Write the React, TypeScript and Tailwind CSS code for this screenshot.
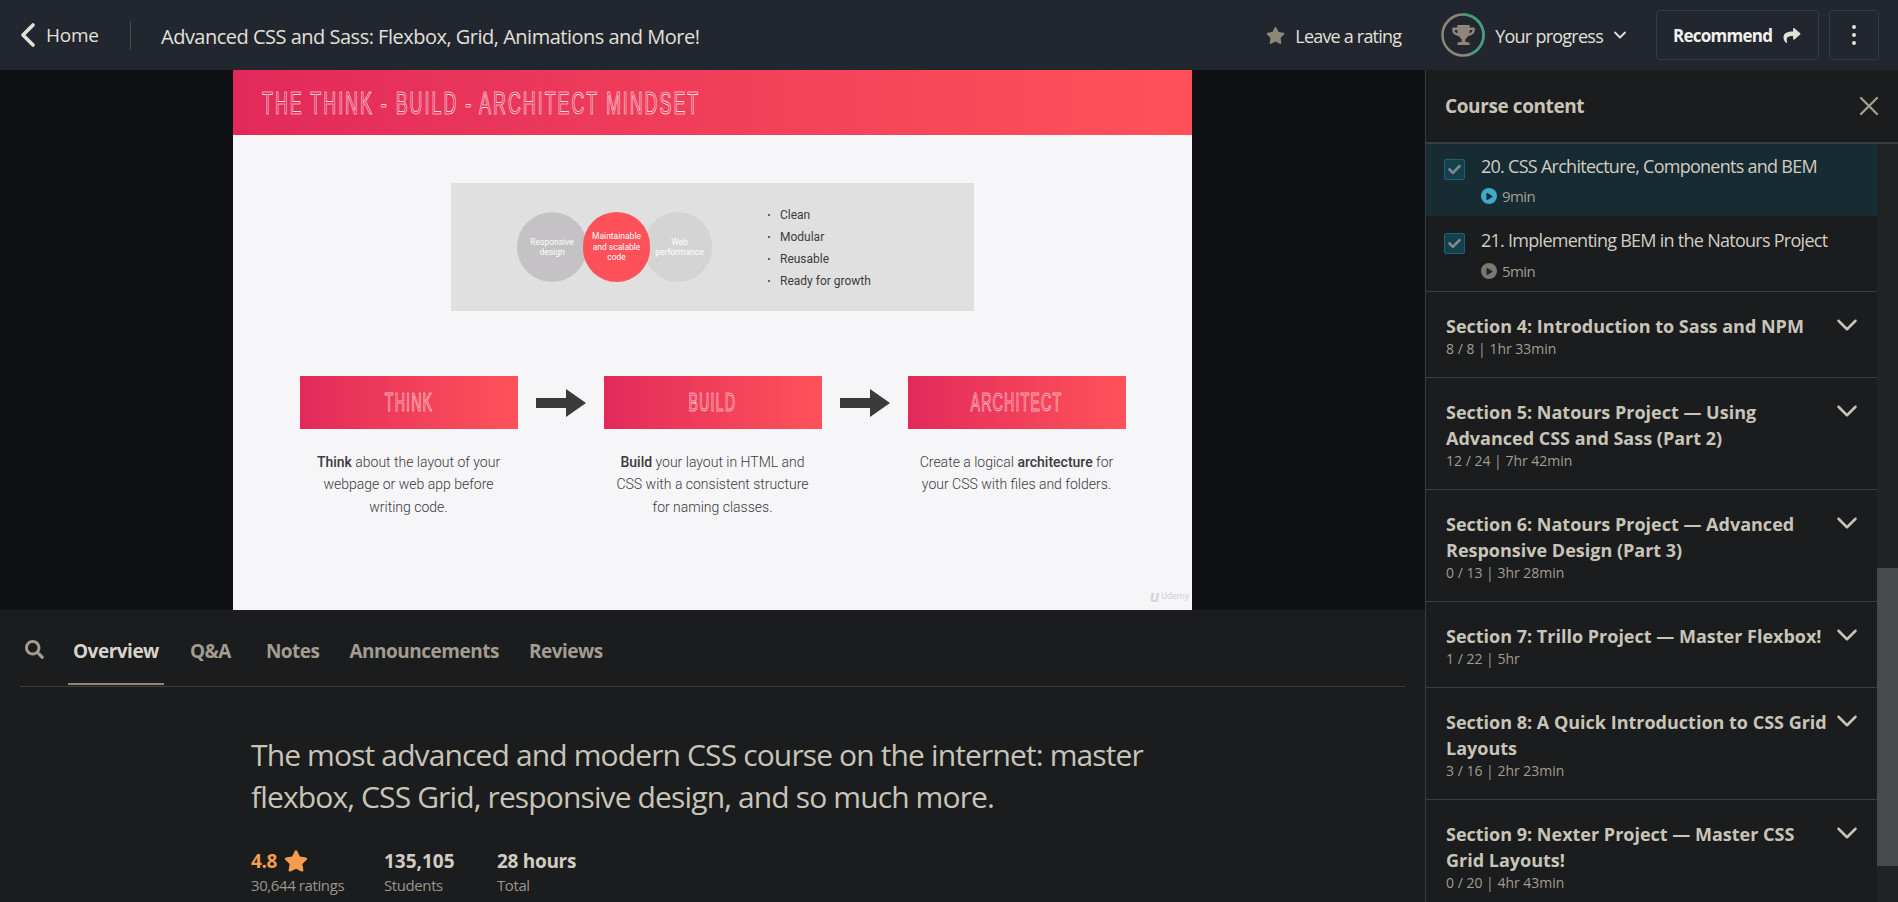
import { ChevronDown, ChevronLeft, X } from "lucide-react";
import { FaPlay, FaShare, FaStar, FaTrophy, FaSearch, FaCheck } from "react-icons/fa";

const sections = [
  { title: "Section 4: Introduction to Sass and NPM", meta: "8 / 8 | 1hr 33min" },
  { title: "Section 5: Natours Project — Using Advanced CSS and Sass (Part 2)", meta: "12 / 24 | 7hr 42min" },
  { title: "Section 6: Natours Project — Advanced Responsive Design (Part 3)", meta: "0 / 13 | 3hr 28min" },
  { title: "Section 7: Trillo Project — Master Flexbox!", meta: "1 / 22 | 5hr" },
  { title: "Section 8: A Quick Introduction to CSS Grid Layouts", meta: "3 / 16 | 2hr 23min" },
  { title: "Section 9: Nexter Project — Master CSS Grid Layouts!", meta: "0 / 20 | 4hr 43min" },
];

const Lesson = ({ title, time, active }: { title: string; time: string; active?: boolean }) => (
  <div className={`flex gap-[16px] pl-[18px] ${active ? "h-[72px] bg-[#172b32] pt-[10px]" : "h-[76px] border-b border-[#3a3d40] pt-[12px]"}`}>
    <div className="mt-[5px] flex h-[21px] w-[21px] items-center justify-center rounded-[2px] border border-[#1c6272] bg-[#143f4b]">
      <FaCheck className="h-[13px] w-[13px] text-[#7f8a8c]" />
    </div>
    <div>
      <div className="text-[18px] leading-[24px] tracking-[-0.73px] text-[#d2cdc3]">{title}</div>
      <div className={`flex items-center gap-[5px] text-[15px] leading-[18px] tracking-[-0.6px] text-[#a39d92] ${active ? "mt-[9px]" : "mt-[10px]"}`}>
        <span className={`flex h-[16px] w-[16px] items-center justify-center rounded-full ${active ? "bg-[#3fa9c9]" : "bg-[#7d776e]"}`}>
          <FaPlay className="ml-[1px] h-[7px] w-[7px] text-[#172b32]" />
        </span>
        {time}
      </div>
    </div>
  </div>
);

const Step = ({ label, children }: { label: string; children: React.ReactNode }) => (
  <div className="w-[218px]">
    <div className="flex h-[53px] items-center justify-center overflow-hidden bg-gradient-to-r from-[#e2295a] to-[#ff5159] font-['Liberation_Sans',sans-serif] text-[26px] tracking-[2px] text-transparent [-webkit-text-stroke:0.6px_#ffffff]">
      <span className="scale-x-[0.55] whitespace-nowrap">{label}</span>
    </div>
    <p className="mt-[22px] px-[9px] text-center font-['Roboto',sans-serif] text-[14px] font-light leading-[22.3px] text-[#3a3a3c]">
      {children}
    </p>
  </div>
);

const Arrow = () => (
  <svg width="50" height="28" viewBox="0 0 50 28" className="mx-[18px] mt-[13px] shrink-0">
    <path d="M0 9h30V0l20 14-20 14v-9H0z" fill="#3a3a3a" />
  </svg>
);

const Slide = () => (
  <div className="relative flex h-[540px] w-[959px] flex-col bg-[#f6f5f8]">
    <div className="flex h-[65px] items-center overflow-hidden bg-gradient-to-r from-[#e2295a] to-[#ff5159] pl-[29px] font-['Liberation_Sans',sans-serif] text-[32px] tracking-[3.5px] text-transparent [-webkit-text-stroke:0.7px_#ffffff]">
      <span className="origin-left scale-x-[0.56] whitespace-nowrap">THE THINK - BUILD - ARCHITECT MINDSET</span>
    </div>
    <div className="ml-[218px] mt-[48px] flex h-[128px] w-[523px] items-center bg-[#e0e0e0] pl-[66px] font-['Roboto',sans-serif]">
      <div className="flex text-center text-[8.5px] leading-[10.5px] text-white">
        <div className="flex h-[70px] w-[70px] items-center justify-center rounded-full bg-[#c4c2c4] px-[8px]">Responsive design</div>
        <div className="z-10 -ml-[4px] flex h-[70px] w-[67px] items-center justify-center rounded-full bg-[#ff5159] px-[3px]">Maintainable and scalable code</div>
        <div className="-ml-[6px] flex h-[70px] w-[68px] items-center justify-center rounded-full bg-[#d4d4d4] pl-[3px]">Web performance</div>
      </div>
      <ul className="ml-[56px] pt-[2px] text-[12px] leading-[22px] text-[#3c3c3c]">
        {["Clean", "Modular", "Reusable", "Ready for growth"].map((item) => (
          <li key={item} className="flex items-center gap-[10px]">
            <span className="h-[2px] w-[2px] rounded-full bg-[#3c3c3c]" />
            {item}
          </li>
        ))}
      </ul>
    </div>
    <div className="mt-[65px] flex justify-center">
      <Step label="THINK"><b className="font-medium">Think</b> about the layout of your webpage or web app before writing code.</Step>
      <Arrow />
      <Step label="BUILD"><b className="font-medium">Build</b> your layout in HTML and CSS with a consistent structure for naming classes.</Step>
      <Arrow />
      <Step label="ARCHITECT">Create a logical <b className="font-medium">architecture</b> for your CSS with files and folders.</Step>
    </div>
    <div className="absolute bottom-[5px] right-[3px] flex items-center gap-[2px] font-['Roboto',sans-serif] text-[9px] text-[#cfcfd4]">
      <span className="text-[17px] font-bold italic leading-none text-[#d5d4d9]">u</span>
      Udemy
    </div>
  </div>
);

export default function App() {
  return (
    <div className="flex h-[902px] flex-col overflow-hidden bg-[#1a1c1e] font-['Open_Sans',sans-serif]">
      <header className="flex h-[70px] shrink-0 items-center bg-[#21262f] text-[#e2e0da]">
        <ChevronLeft className="ml-[8px] h-[40px] w-[40px] shrink-0 text-[#e2e0da]" strokeWidth={2.2} />
        <span className="-ml-[2px] w-[84px] pt-[1px] text-[19px] tracking-[-0.25px]">Home</span>
        <div className="h-[29px] w-px bg-[#4b4a48]" />
        <span className="ml-[30px] pt-[3px] text-[20px] tracking-[-0.5px]">Advanced CSS and Sass: Flexbox, Grid, Animations and More!</span>
        <div className="ml-auto flex items-center">
          <FaStar className="h-[19px] w-[19px] text-[#8d8679]" />
          <span className="ml-[10px] pt-[2px] text-[18px] tracking-[-0.8px]">Leave a rating</span>
          <div className="relative ml-[40px] flex h-[44px] w-[44px] items-center justify-center">
            <svg viewBox="0 0 44 44" className="absolute inset-0 h-[44px] w-[44px]">
              <circle cx="22" cy="22" r="20.5" fill="none" stroke="#8d8679" strokeWidth="2.5" />
              <path d="M22 1.5A20.5 20.5 0 0 1 29 41.3" fill="none" stroke="#3f9d80" strokeWidth="2.5" />
            </svg>
            <FaTrophy className="h-[20px] w-[23px] text-[#8d8679]" />
          </div>
          <span className="ml-[10px] pt-[2px] text-[18px] tracking-[-0.75px]">Your progress</span>
          <ChevronDown className="ml-[7px] h-[20px] w-[20px]" strokeWidth={2.2} />
          <button className="ml-[26px] flex h-[50px] w-[163px] items-center rounded-[4px] border border-[#363a41] pl-[16px] text-[17px] font-bold tracking-[-0.75px] text-[#f2f0ec]">
            <span className="pt-[2px]">Recommend</span>
            <FaShare className="ml-[11px] h-[17px] w-[18px] text-[#e2e0da]" />
          </button>
          <button className="ml-[10px] mr-[19px] flex h-[50px] w-[50px] flex-col items-center justify-center gap-[4px] rounded-[4px] border border-[#363a41]">
            <span className="h-[4px] w-[4px] rounded-full bg-[#e2e0da]" />
            <span className="h-[4px] w-[4px] rounded-full bg-[#e2e0da]" />
            <span className="h-[4px] w-[4px] rounded-full bg-[#e2e0da]" />
          </button>
        </div>
      </header>

      <div className="flex min-h-0 flex-1">
        <main className="w-[1425px] shrink-0">
          <div className="flex h-[540px] justify-center bg-[#0f1114]">
            <Slide />
          </div>
          <nav className="mx-[20px] flex h-[77px] items-center border-b border-[#3e3d36] pt-[6px] text-[19px] font-bold tracking-[-0.5px] text-[#a39d90]">
            <FaSearch className="-mt-[3px] ml-[5px] h-[19px] w-[19px]" />
            <span className="relative ml-[29px] text-[#d8d4ca]">
              Overview
              <span className="absolute -bottom-[20px] -left-[5px] -right-[5px] h-[2px] bg-[#8d8679]" />
            </span>
            <span className="ml-[31px]">Q&amp;A</span>
            <span className="ml-[35px]">Notes</span>
            <span className="ml-[30px]">Announcements</span>
            <span className="ml-[30px]">Reviews</span>
          </nav>
          <section className="pl-[251px] pt-[47px] text-[#c9c4b8]">
            <h2 className="w-[920px] text-[30px] leading-[42px] tracking-[-0.87px]">
              The most advanced and modern CSS course on the internet: master flexbox, CSS Grid, responsive design, and so much more.
            </h2>
            <div className="mt-[30px] flex">
              <div className="w-[133px]">
                <div className="flex items-center gap-[7px] text-[19px] font-bold leading-[26px] tracking-[-0.4px] text-[#f69c4d]">
                  4.8 <FaStar className="h-[22px] w-[24px]" />
                </div>
                <div className="mt-[1px] text-[15px] leading-[20px] tracking-[-0.4px] text-[#9c968b]">30,644 ratings</div>
              </div>
              <div className="w-[113px]">
                <div className="text-[19px] font-bold leading-[26px] text-[#d2cdc3]">135,105</div>
                <div className="mt-[1px] text-[15px] leading-[20px] tracking-[-0.4px] text-[#9c968b]">Students</div>
              </div>
              <div>
                <div className="text-[19px] font-bold leading-[26px] tracking-[-0.3px] text-[#d2cdc3]">28 hours</div>
                <div className="mt-[1px] text-[15px] leading-[20px] tracking-[-0.4px] text-[#9c968b]">Total</div>
              </div>
            </div>
          </section>
        </main>

        <aside className="flex min-w-0 flex-1 flex-col border-l border-[#3a3d40]">
          <div className="flex h-[74px] shrink-0 items-center justify-between border-b-2 border-[#3a3d40] pl-[19px] pr-[13px]">
            <span className="text-[19px] font-bold tracking-[-0.4px] text-[#c9c4b8]">Course content</span>
            <X className="h-[32px] w-[32px] text-[#a39d90]" strokeWidth={1.8} />
          </div>
          <div className="flex min-h-0 flex-1">
            <div className="min-w-0 flex-1 overflow-hidden">
              <Lesson title="20. CSS Architecture, Components and BEM" time="9min" active />
              <Lesson title="21. Implementing BEM in the Natours Project" time="5min" />
              {sections.map((s) => (
                <div key={s.title} className="flex justify-between border-b border-[#3a3d40] pb-[18px] pl-[20px] pr-[13px] pt-[21px]">
                  <div className="w-[384px]">
                    <div className="text-[18px] font-bold leading-[26px] text-[#c9c4b8]">{s.title}</div>
                    <div className="text-[14px] leading-[20px] text-[#a39d90]">{s.meta}</div>
                  </div>
                  <ChevronDown className="-mt-[5px] h-[34px] w-[34px] shrink-0 text-[#c9c4b8]" strokeWidth={1.8} />
                </div>
              ))}
            </div>
            <div className="flex w-[21px] shrink-0 flex-col bg-[#202324] pt-[424px]">
              <div className="h-[298px] bg-[#454a4d]" />
            </div>
          </div>
        </aside>
      </div>
    </div>
  );
}
